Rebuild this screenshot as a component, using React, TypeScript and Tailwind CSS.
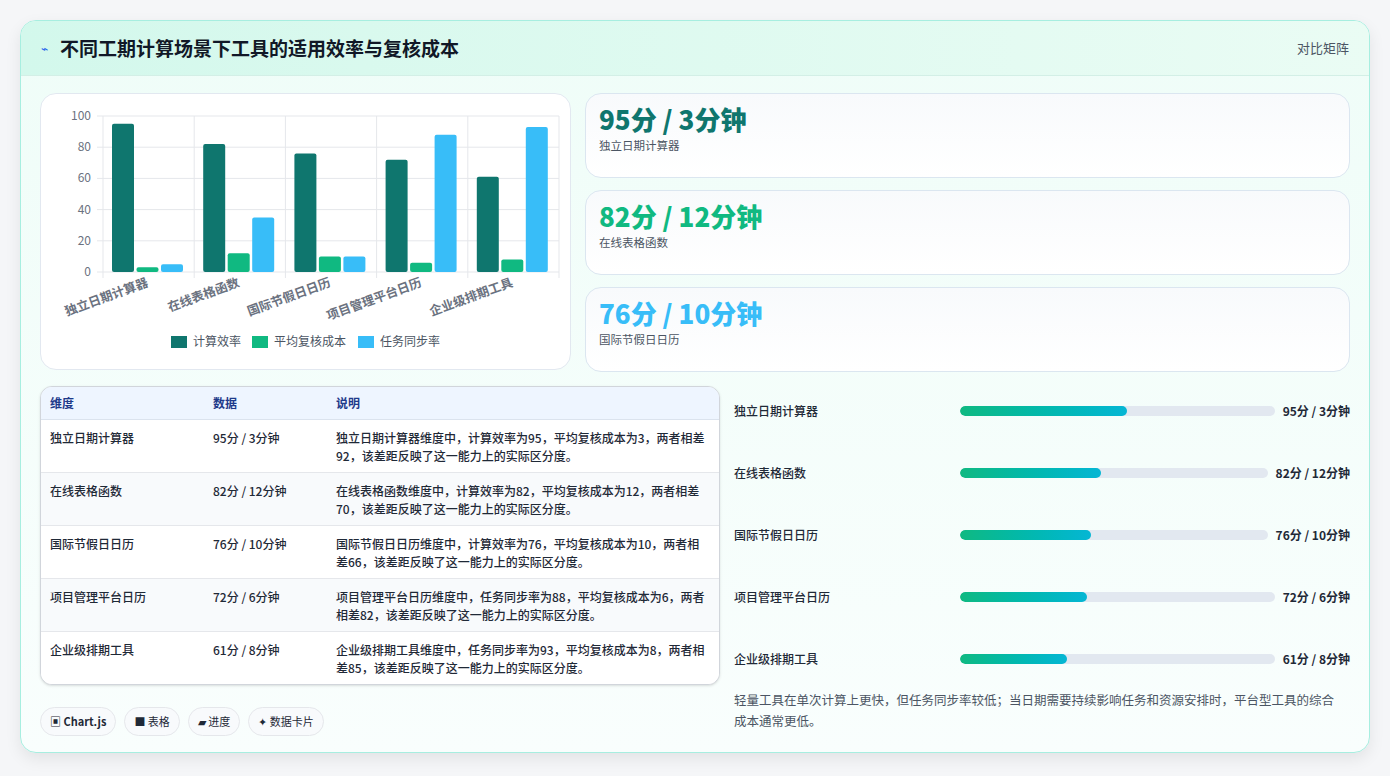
import React from "react";

const rows = [
  { name: "独立日期计算器", val: "95分 / 3分钟", eff: 95, cost: 3, sync: 5, note: "独立日期计算器维度中，计算效率为95，平均复核成本为3，两者相差92，该差距反映了这一能力上的实际区分度。" },
  { name: "在线表格函数", val: "82分 / 12分钟", eff: 82, cost: 12, sync: 35, note: "在线表格函数维度中，计算效率为82，平均复核成本为12，两者相差70，该差距反映了这一能力上的实际区分度。" },
  { name: "国际节假日日历", val: "76分 / 10分钟", eff: 76, cost: 10, sync: 10, note: "国际节假日日历维度中，计算效率为76，平均复核成本为10，两者相差66，该差距反映了这一能力上的实际区分度。" },
  { name: "项目管理平台日历", val: "72分 / 6分钟", eff: 72, cost: 6, sync: 88, note: "项目管理平台日历维度中，任务同步率为88，平均复核成本为6，两者相差82，该差距反映了这一能力上的实际区分度。" },
  { name: "企业级排期工具", val: "61分 / 8分钟", eff: 61, cost: 8, sync: 93, note: "企业级排期工具维度中，任务同步率为93，平均复核成本为8，两者相差85，该差距反映了这一能力上的实际区分度。" },
];

const font = { fontFamily: '"Noto Sans CJK SC", "Noto Sans", sans-serif' };

function Chart() {
  // plot area: x 62..518, y 22..178 inside a 531-wide svg
  const x0 = 62, x1 = 518, y0 = 178, yTop = 22;
  const cw = (x1 - x0) / 5;
  const sc = (y0 - yTop) / 100;
  const colors = ["#0f766e", "#10b981", "#38bdf8"];
  return (
    <svg width="531" height="277" viewBox="0 0 531 277" style={font}>
      {[0, 20, 40, 60, 80, 100].map((t) => (
        <g key={t}>
          <line x1={x0 - 6} x2={x1} y1={y0 - t * sc} y2={y0 - t * sc} stroke="#e5e7eb" />
          <text x={x0 - 12} y={y0 - t * sc + 4} fontSize="12" fill="#6b7280" textAnchor="end">{t}</text>
        </g>
      ))}
      {[0, 1, 2, 3, 4, 5].map((i) => (
        <line key={i} x1={x0 + i * cw} x2={x0 + i * cw} y1={yTop} y2={y0 + 6} stroke="#e5e7eb" />
      ))}
      {rows.map((r, i) =>
        [r.eff, r.cost, r.sync].map((v, j) => (
          <rect key={i + "-" + j} x={x0 + i * cw + 9 + j * 24.5} y={y0 - v * sc} width="22" height={v * sc} rx="2" fill={colors[j]} />
        ))
      )}
      {rows.map((r, i) => (
        <text key={r.name} fontSize="12.5" fontWeight="700" fill="#6b7280" textAnchor="end" transform={`translate(${x0 + i * cw + 46} 192) rotate(-20)`}>{r.name}</text>
      ))}
      {["计算效率", "平均复核成本", "任务同步率"].map((l, j) => {
        const xs = [130, 211, 317];
        return (
          <g key={l}>
            <rect x={xs[j]} y={242} width="16" height="12" fill={colors[j]} />
            <text x={xs[j] + 22} y={252} fontSize="12" fill="#4b5563">{l}</text>
          </g>
        );
      })}
    </svg>
  );
}

export default function App() {
  const stats = [
    { c: "text-[#0f766e]", r: rows[0] },
    { c: "text-[#10b981]", r: rows[1] },
    { c: "text-[#38bdf8]", r: rows[2] },
  ];
  return (
    <div className="min-h-[776px] bg-[#f5f6f8] p-5 pb-[21px]" style={font}>
      <div className="rounded-2xl border border-[#a7eee0] bg-gradient-to-b from-[#effdf8] to-[#f9fefd] shadow-[0_6px_16px_rgba(0,0,0,0.08)] overflow-hidden">
        <div className="h-[55px] flex items-center justify-between px-5 bg-gradient-to-r from-[#d3f8ec] to-[#eafcf4] border-b border-[#d3efe6]">
          <div className="flex items-center gap-3">
            <span className="text-[#2563eb] text-xs">⌁</span>
            <h1 className="text-[19px] font-bold text-[#111827]">不同工期计算场景下工具的适用效率与复核成本</h1>
          </div>
          <span className="text-[13px] text-[#4b5563]">对比矩阵</span>
        </div>
        <div className="px-[19px] pt-[17px] pb-[16px]">
          <div className="flex gap-[14px]">
            <div className="w-[531px] h-[277px] rounded-2xl border border-[#e2e8f0] bg-white">
              <Chart />
            </div>
            <div className="flex-1 flex flex-col gap-3">
              {stats.map((s) => (
                <div key={s.r.name} className="h-[85px] rounded-2xl border border-[#dbe6f0] bg-gradient-to-b from-[#f8fafc] to-white px-[13px] pt-[7px]">
                  <div className={`text-[26px] font-extrabold leading-[36px] ${s.c}`}>{s.r.val}</div>
                  <div className="text-[11.5px] text-[#4b5563]">{s.r.name}</div>
                </div>
              ))}
            </div>
          </div>
          <div className="flex gap-[14px] mt-[14px]">
            <div className="w-[680px] shrink-0">
              <div className="rounded-xl border border-[#d1d5db] overflow-hidden bg-white shadow-sm">
                <table className="w-full text-[12px] text-[#1f2937] font-medium">
                  <thead>
                    <tr className="bg-[#eef5ff] text-[#1e3a8a] text-left h-[32px] border-b border-[#dbe3ee]">
                      <th className="font-semibold pl-[9px] w-[172px]">维度</th>
                      <th className="font-semibold w-[123px]">数据</th>
                      <th className="font-semibold">说明</th>
                    </tr>
                  </thead>
                  <tbody>
                    {rows.map((r, i) => (
                      <tr key={r.name} className={`${i % 2 ? "bg-[#f8fafc]" : "bg-white"} border-b last:border-b-0 border-[#e5e7eb] h-[53px] align-top`}>
                        <td className="pl-[9px] pt-[9px]">{r.name}</td>
                        <td className="pt-[9px]">{r.val}</td>
                        <td className="pt-[9px] pr-2 leading-[18px]">{r.note}</td>
                      </tr>
                    ))}
                  </tbody>
                </table>
              </div>
              <div className="flex gap-2 mt-[22px] text-[11px] text-[#1f2937]">
                {["▣ Chart.js", "■ 表格", "▰ 进度", "✦ 数据卡片"].map((t, i) => (
                  <span key={t} className={`h-[29px] flex items-center px-[9px] rounded-full border border-[#e5e7eb] bg-[#f8fafc] ${i === 0 ? "font-bold" : ""}`}>{t}</span>
                ))}
              </div>
            </div>
            <div className="flex-1">
              <div className="flex flex-col -mt-[6px]">
                {rows.map((r) => (
                  <div key={r.name} className="h-[62px] flex items-center text-[12px] font-medium text-[#1f2937]">
                    <span className="w-[226px]">{r.name}</span>
                    <div className="flex-1 h-[10px] rounded-full bg-[#e2e8f0] overflow-hidden">
                      <div className="h-full rounded-full bg-gradient-to-r from-[#10b981] to-[#06b6d4]" style={{ width: `${r.eff * 0.56}%` }} />
                    </div>
                    <span className="ml-2 text-right font-bold">{r.val}</span>
                  </div>
                ))}
              </div>
              <p className="-mt-[1px] text-[12.5px] leading-[21px] text-[#4b5563] pr-1">
                轻量工具在单次计算上更快，但任务同步率较低；当日期需要持续影响任务和资源安排时，平台型工具的综合成本通常更低。
              </p>
            </div>
          </div>
        </div>
      </div>
    </div>
  );
}
